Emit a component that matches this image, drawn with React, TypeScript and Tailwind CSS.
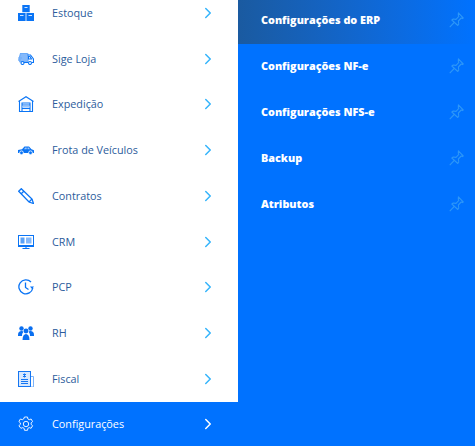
import { ChevronRight } from "lucide-react";
import type { ReactNode } from "react";

const Boxes = () => (
  <svg viewBox="0 0 16 16" className="w-4 h-4" fill="#0a74f5">
    <rect x="4.300" y="0" width="7.400" height="7.200" />
    <rect x="0" y="8" width="7.600" height="8" />
    <rect x="8.400" y="8" width="7.600" height="8" />
    <rect x="6.500" y="2" width="3" height="1" fill="#cfe3ff" />
    <rect x="2" y="10" width="3.500" height="1" fill="#cfe3ff" />
    <rect x="10.500" y="10" width="3.500" height="1" fill="#cfe3ff" />
  </svg>
);

const Truck = () => (
  <svg viewBox="0 0 16 12" className="w-4 h-3" fill="none" stroke="#0a74f5" strokeWidth="1.100">
    <path d="M1.500 4 2.500.5h6.500l1 .5v8H5.500H2L1 7Z" fill="#85b9fa" stroke="#6aaaf9" />
    <path d="M9.500 2h3l3 4v3.500h-1.500M10 9.500H6" />
    <path d="M10.500 3.500h1.500l1.500 2.500h-3Z" />
    <path d="M0 5h4M0 7h3" stroke="#6aaaf9" />
    <circle cx="4.500" cy="10" r="1.500" fill="#fff" />
    <circle cx="12" cy="10" r="1.500" fill="#fff" />
  </svg>
);

const Garage = () => (
  <svg viewBox="0 0 16 16" className="w-4 h-4" fill="none" stroke="#0a74f5" strokeWidth="1.100">
    <path d="M.5 5.500 8 .7l7.500 4.800" />
    <path d="M1.500 5v10.500h13V5" />
    <path d="M4 15.500V7h8v8.500" />
    <path d="M4 9h8" />
    <rect x="4.500" y="9.500" width="7" height="2" fill="#9cc6fb" stroke="none" />
    <path d="M4 12.500h8" />
  </svg>
);

const Car = () => (
  <svg viewBox="0 0 16 9" className="w-4 h-[9px]" fill="#0a74f5">
    <path d="M0 4 4 3.300 6.500.5h4.500L13.500 3.300 16 4.200V7H0Z" />
    <path d="M6 3.200 7.200 1.500h1.500v1.700ZM9.500 1.500h1.200l1.300 1.700H9.500Z" fill="#9cc6fb" />
    <circle cx="3.500" cy="6.800" r="1.900" stroke="#fff" strokeWidth=".8" />
    <circle cx="12.500" cy="6.800" r="1.900" stroke="#fff" strokeWidth=".8" />
  </svg>
);

const Pen = () => (
  <svg viewBox="0 0 16 16" className="w-4 h-4" fill="none" stroke="#0a74f5" strokeWidth="1.300">
    <path d="M.7 3.300 3.300.7 14 11l1.500 4.500L11 14Z" />
    <path d="M3.200 5.800 5.800 3.200" />
    <path d="M11 14 14 11" />
  </svg>
);

const Monitor = () => (
  <svg viewBox="0 0 16 14" className="w-4 h-3.5" fill="none" stroke="#0a74f5">
    <rect x=".5" y=".5" width="15" height="10" />
    <path d="M0 11.500h16M8 11.500v1.500M4.500 13.500h7" />
    <rect x="2.500" y="2.500" width="4" height="6" fill="#5aa2f8" stroke="none" />
    <rect x="8" y="2.500" width="5.500" height="6" fill="#85b9fa" stroke="none" />
  </svg>
);

const Clock = () => (
  <svg viewBox="0 0 16 16" className="w-4 h-4" fill="none" stroke="#0a74f5" strokeWidth="1.300">
    <path d="M14.800 9A7 7 0 1 1 13 3" />
    <path d="M7.500 3.500V8.500L10.500 10.500" />
    <path d="M12 7.500h4L14 10Z" fill="#0a74f5" stroke="none" />
  </svg>
);

const People = () => (
  <svg viewBox="0 0 16 14" className="w-4 h-3.5" fill="#0a6ff0">
    <circle cx="3.500" cy="2.500" r="2.200" />
    <circle cx="12.500" cy="2.500" r="2.200" />
    <path d="M0 9c0-3 1.500-4 3.500-4 1 0 1.500.3 2 .8C4.500 7 4 8 4 10H0Z" />
    <path d="M16 9c0-3-1.500-4-3.500-4-1 0-1.500.3-2 .8 1 1.200 1.500 2.200 1.500 4.200h4Z" />
    <circle cx="8" cy="5" r="2.400" />
    <path d="M4.500 14c0-4 1.500-6 3.500-6s3.500 2 3.500 6Z" />
  </svg>
);

const Receipt = () => (
  <svg viewBox="0 0 16 16" className="w-4 h-4" fill="none" stroke="#1576f2">
    <path d="M13 5.500h2.500V16H5" stroke="#7db4fa" />
    <rect x=".5" y=".5" width="12" height="15" fill="#d7e8fe" />
    <path d="M3 8.500h7M3 10.500h7M3 12.500h7" />
    <path d="M6.500 2.500v4M5 3.500h3M5 5.500h3" />
  </svg>
);

const Gear = () => (
  <svg viewBox="0 0 16 16" className="w-4 h-4" fill="none" stroke="#fff" strokeWidth=".9" strokeLinejoin="round">
    <path d="M6.500.6h3l.4 2 1.300.7 1.900-.7 1.500 2.600-1.500 1.300v1.500l1.500 1.300-1.500 2.600-1.900-.7-1.300.7-.4 2h-3l-.4-2-1.300-.7-1.900.7L.9 9.300l1.500-1.300V6.500L.9 5.200l1.500-2.600 1.900.7 1.300-.7Z" transform="translate(0 .4)" />
    <circle cx="8" cy="8" r="2.700" />
  </svg>
);

const Pin = () => (
  <svg viewBox="0 0 16 16" className="w-[15px] h-4" preserveAspectRatio="none" fill="none" stroke="#2d97f8" strokeWidth="1.100" strokeLinejoin="round">
    <path d="M10 .8 15.200 6l-1 .6-1.200-.6-3 3 .4 3-1 1.500L3 8l1.500-1 3 .4 3-3-.6-1.200Z" />
    <path d="M5.500 10.500.8 15.200" />
  </svg>
);

const menu: { label: string; icon: ReactNode }[] = [
  { label: "Estoque", icon: <Boxes /> },
  { label: "Sige Loja", icon: <Truck /> },
  { label: "Expedição", icon: <Garage /> },
  { label: "Frota de Veículos", icon: <Car /> },
  { label: "Contratos", icon: <Pen /> },
  { label: "CRM", icon: <Monitor /> },
  { label: "PCP", icon: <Clock /> },
  { label: "RH", icon: <People /> },
  { label: "Fiscal", icon: <Receipt /> },
];

const subItems = [
  "Configurações do ERP",
  "Configurações NF-e",
  "Configurações NFS-e",
  "Backup",
  "Atributos",
];

export default function App() {
  return (
    <div className="flex w-[475px] h-[446px] overflow-hidden bg-[#0072ff] font-['Open_Sans','Noto_Sans',sans-serif]">
      <div className="w-[238px] shrink-0 bg-white">
        <ul className="-mt-[10px]">
          {menu.map((item) => (
            <li key={item.label} className="flex items-center h-[45.75px] pl-[18px] pr-[21px]">
              <span className="w-[34px] flex justify-start">{item.icon}</span>
              <span className="flex-1 text-[10.800px] text-[#2c5c9c]">{item.label}</span>
              <ChevronRight size={18} strokeWidth={2} className="text-[#35b4fb]" />
            </li>
          ))}
          <li className="flex items-center h-[44px] pl-[18px] pr-[21px] bg-[#0072ff]">
            <span className="w-[34px] flex justify-start"><Gear /></span>
            <span className="flex-1 text-[10.800px] text-white">Configurações</span>
            <ChevronRight size={18} strokeWidth={2} className="text-white" />
          </li>
        </ul>
      </div>
      <ul className="flex-1">
        {subItems.map((label, i) => (
          <li
            key={label}
            className={
              i === 0
                ? "flex items-center justify-between h-[44px] mb-[2px] pb-1 pl-[23px] pr-[11px] bg-gradient-to-r from-[#1a5aa0] to-[#0072ff]"
                : "flex items-center justify-between h-[44px] mb-[2px] pb-1 pl-[23px] pr-[11px]"
            }
          >
            <span className="text-[10.800px] font-extrabold text-white">{label}</span>
            <Pin />
          </li>
        ))}
      </ul>
    </div>
  );
}
